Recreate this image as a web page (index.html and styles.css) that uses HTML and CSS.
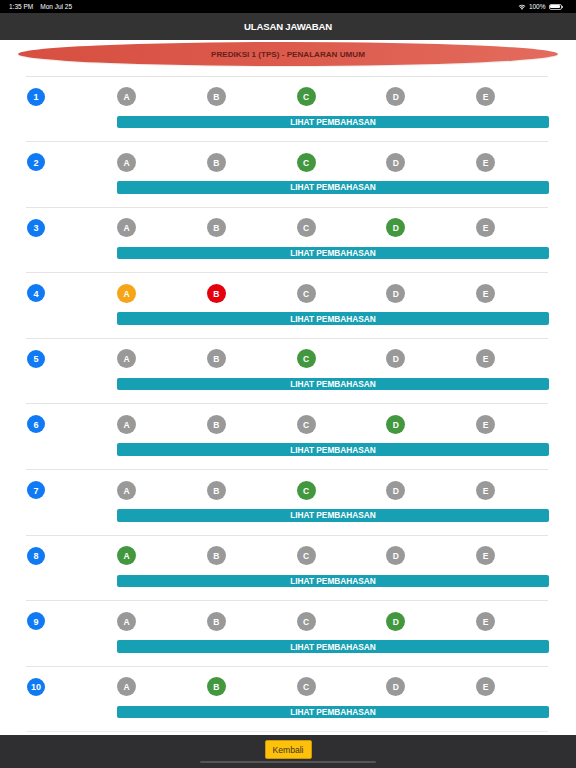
FILE: index.html
```html
<!DOCTYPE html>
<html>
<head>
<meta charset="utf-8">
<link rel="stylesheet" href="styles.css">
</head>
<body>
<div class="screen">
  <div class="status">
    <div class="status-left"><span>1:35 PM</span><span class="date">Mon Jul 25</span></div>
    <div class="status-right">
      <svg class="wifi" width="8" height="6" viewBox="0 0 16 12"><path d="M8 11.5 L10.3 9 A3.3 3.3 0 0 0 5.7 9 Z" fill="#fff"/><path d="M3.6 6.8 A6.3 6.3 0 0 1 12.4 6.8 L11.2 8.1 A4.6 4.6 0 0 0 4.8 8.1 Z" fill="#fff"/><path d="M1.2 4.3 A9.8 9.8 0 0 1 14.8 4.3 L13.6 5.6 A8 8 0 0 0 2.4 5.6 Z" fill="#fff"/></svg>
      <span>100%</span>
      <span class="battery"><span class="battery-fill"></span></span><span class="battery-tip"></span>
    </div>
  </div>
  <div class="navbar">ULASAN JAWABAN</div>
  <div class="content">
    <div class="banner">PREDIKSI 1 (TPS) - PENALARAN UMUM</div>
    <div class="list">
      <div class="row"><div class="opts"><span class="dot num">1</span><span class="dot gray">A</span><span class="dot gray">B</span><span class="dot green">C</span><span class="dot gray">D</span><span class="dot gray">E</span></div><div class="btn">LIHAT PEMBAHASAN</div></div>
      <div class="row"><div class="opts"><span class="dot num">2</span><span class="dot gray">A</span><span class="dot gray">B</span><span class="dot green">C</span><span class="dot gray">D</span><span class="dot gray">E</span></div><div class="btn">LIHAT PEMBAHASAN</div></div>
      <div class="row"><div class="opts"><span class="dot num">3</span><span class="dot gray">A</span><span class="dot gray">B</span><span class="dot gray">C</span><span class="dot green">D</span><span class="dot gray">E</span></div><div class="btn">LIHAT PEMBAHASAN</div></div>
      <div class="row"><div class="opts"><span class="dot num">4</span><span class="dot orange">A</span><span class="dot red">B</span><span class="dot gray">C</span><span class="dot gray">D</span><span class="dot gray">E</span></div><div class="btn">LIHAT PEMBAHASAN</div></div>
      <div class="row"><div class="opts"><span class="dot num">5</span><span class="dot gray">A</span><span class="dot gray">B</span><span class="dot green">C</span><span class="dot gray">D</span><span class="dot gray">E</span></div><div class="btn">LIHAT PEMBAHASAN</div></div>
      <div class="row"><div class="opts"><span class="dot num">6</span><span class="dot gray">A</span><span class="dot gray">B</span><span class="dot gray">C</span><span class="dot green">D</span><span class="dot gray">E</span></div><div class="btn">LIHAT PEMBAHASAN</div></div>
      <div class="row"><div class="opts"><span class="dot num">7</span><span class="dot gray">A</span><span class="dot gray">B</span><span class="dot green">C</span><span class="dot gray">D</span><span class="dot gray">E</span></div><div class="btn">LIHAT PEMBAHASAN</div></div>
      <div class="row"><div class="opts"><span class="dot num">8</span><span class="dot green">A</span><span class="dot gray">B</span><span class="dot gray">C</span><span class="dot gray">D</span><span class="dot gray">E</span></div><div class="btn">LIHAT PEMBAHASAN</div></div>
      <div class="row"><div class="opts"><span class="dot num">9</span><span class="dot gray">A</span><span class="dot gray">B</span><span class="dot gray">C</span><span class="dot green">D</span><span class="dot gray">E</span></div><div class="btn">LIHAT PEMBAHASAN</div></div>
      <div class="row"><div class="opts"><span class="dot num">10</span><span class="dot gray">A</span><span class="dot green">B</span><span class="dot gray">C</span><span class="dot gray">D</span><span class="dot gray">E</span></div><div class="btn">LIHAT PEMBAHASAN</div></div>
    </div>
  </div>
  <div class="footer">
    <div class="kembali">Kembali</div>
    <div class="home"></div>
  </div>
</div>
</body>
</html>
```

FILE: styles.css
```css
* { box-sizing: border-box; }
html, body { margin: 0; padding: 0; }
body {
  width: 576px;
  height: 768px;
  overflow: hidden;
  font-family: "Liberation Sans", Arial, sans-serif;
  background: #fff;
}
.screen {
  width: 576px;
  height: 768px;
  display: flex;
  flex-direction: column;
}
.status {
  height: 13px;
  background: #000;
  color: #fff;
  font-size: 6.5px;
  display: flex;
  justify-content: space-between;
  align-items: center;
  padding: 0 13px 0 9px;
}
.status-left .date { margin-left: 7px; }
.status-right { display: flex; align-items: center; gap: 2px; }
.wifi { margin-right: 1px; }
.battery {
  width: 13px;
  height: 6px;
  border: 1px solid #bbb;
  border-radius: 2px;
  padding: 0.5px;
  display: flex;
  margin-left: 1px;
}
.battery-fill { flex: 1; background: #fff; border-radius: 1px; }
.battery-tip { width: 1px; height: 2px; background: #bbb; margin-left: -1.5px; }
.navbar {
  height: 27px;
  background: #333333;
  color: #fff;
  font-weight: bold;
  font-size: 9.6px;
  letter-spacing: -0.2px;
  display: flex;
  align-items: center;
  justify-content: center;
}
.content {
  flex: 1;
  background: #fff;
  padding-top: 2px;
}
.banner {
  margin: 0 18px 0 18px;
  height: 24px;
  border-radius: 50%;
  background: linear-gradient(90deg, #d74f40 0%, #dc5b4d 50%, #e36b5d 100%);
  color: #66201a;
  font-weight: bold;
  font-size: 8.1px;
  display: flex;
  align-items: center;
  justify-content: center;
  box-shadow: 0 1px 1px rgba(0,0,0,0.08);
}
.list {
  margin: 9.5px 28px 0 26px;
  border-bottom: 1px solid #ececec;
}
.row {
  border-top: 1px solid #e4e4e4;
  padding: 10.5px 0 13.1px 1px;
}
.opts {
  display: grid;
  grid-template-columns: 90px repeat(5, 89.8px);
  align-items: center;
  margin-bottom: 9.5px;
}
.dot {
  width: 19px;
  height: 19px;
  border-radius: 50%;
  color: #fff;
  font-weight: bold;
  font-size: 8.5px;
  display: flex;
  align-items: center;
  justify-content: center;
  padding-top: 1px;
}
.num { background: #0f7af3; width: 18px; height: 18px; font-size: 9px; }
.gray { background: #999999; }
.green { background: #43983f; }
.orange { background: #f6a418; }
.red { background: #e5000e; }
.btn {
  margin-left: 90px;
  width: 432px;
  height: 12.5px;
  border-radius: 2px;
  background: #179fb3;
  color: #fff;
  font-weight: bold;
  font-size: 8.3px;
  display: flex;
  align-items: center;
  justify-content: center;
}
.footer {
  height: 33.5px;
  background: #2f2f31;
  display: flex;
  flex-direction: column;
  align-items: center;
  padding-top: 5.5px;
}
.kembali {
  width: 47px;
  height: 19px;
  background: #fdc10c;
  border: 1px solid #c89a08;
  border-radius: 2px;
  color: #3a3320;
  font-size: 8.6px;
  display: flex;
  align-items: center;
  justify-content: center;
}
.home {
  width: 176px;
  height: 2.5px;
  border-radius: 2px;
  background: #555557;
  margin-top: 1.5px;
}
```
